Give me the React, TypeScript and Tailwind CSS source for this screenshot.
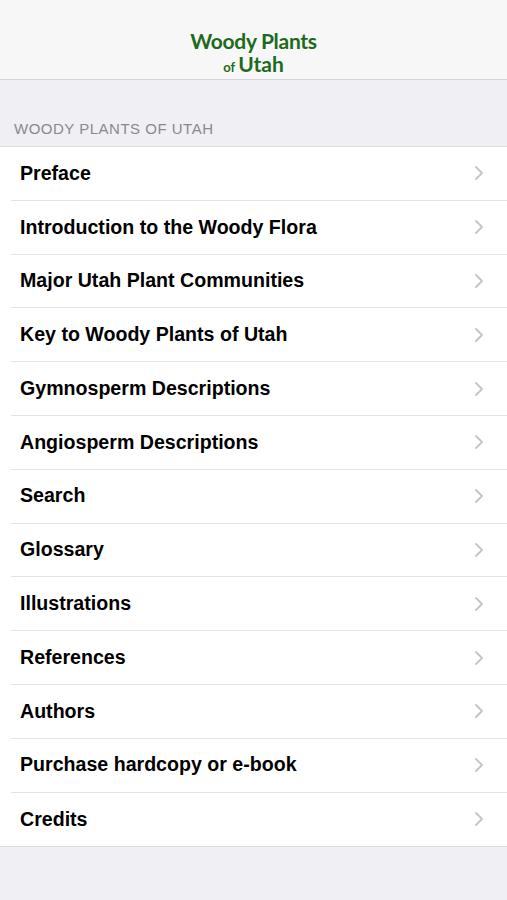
const items = [
  'Preface',
  'Introduction to the Woody Flora',
  'Major Utah Plant Communities',
  'Key to Woody Plants of Utah',
  'Gymnosperm Descriptions',
  'Angiosperm Descriptions',
  'Search',
  'Glossary',
  'Illustrations',
  'References',
  'Authors',
  'Purchase hardcopy or e-book',
  'Credits',
];

function Chevron() {
  return (
    <svg width="10" height="16" viewBox="0 0 10 16" fill="none">
      <path d="M2 2l6 6-6 6" stroke="#c4c4c7" strokeWidth="1.8" strokeLinecap="round" strokeLinejoin="round" />
    </svg>
  );
}

export default function App() {
  return (
    <div className="min-h-[900px] bg-[#efeff4] font-['Liberation_Sans',Arial,sans-serif]">
      <header className="flex h-[80px] flex-col items-center border-b border-[#d6d6da] bg-[#f7f7f7] pt-[29px] font-['Lato',sans-serif] font-bold text-[#1d6a1d]">
        <div className="text-[21px] leading-[23px] tracking-[-0.3px]">Woody Plants</div>
        <div className="flex items-baseline leading-[23px]">
          <span className="mr-[3px] text-[13px]">of</span>
          <span className="text-[21px]">Utah</span>
        </div>
      </header>

      <div className="px-[14px] pb-[8px] pt-[40px] text-[15px] leading-[18px] tracking-[0.5px] text-[#8a8a8f]">
        WOODY PLANTS OF UTAH
      </div>

      <ul className="border-y border-[#dcdce0] bg-white">
        {items.map((label, i) => (
          <li key={label} className="pl-[11px]">
            <div
              className={`flex h-[53.8px] items-center justify-between pl-[9px] pr-[23px] ${
                i < items.length - 1 ? 'border-b border-[#e3e3e6]' : ''
              }`}
            >
              <span className="text-[19.6px] font-bold text-black">{label}</span>
              <Chevron />
            </div>
          </li>
        ))}
      </ul>
    </div>
  );
}
